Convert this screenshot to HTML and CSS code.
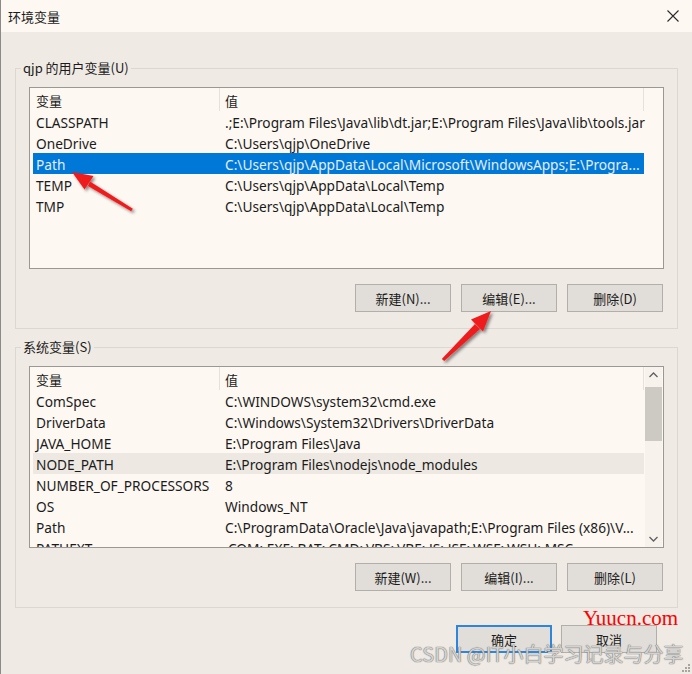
FILE: index.html
```html
<!DOCTYPE html>
<html lang="zh-CN">
<head>
<meta charset="utf-8">
<title>环境变量</title>
<link rel="stylesheet" href="styles.css">
</head>
<body>
<div class="window">
  <div class="titlebar">
    <span class="title">环境变量</span>
    <svg class="close" width="12" height="12" viewBox="0 0 12 12"><path d="M0.5 0.5 L11.5 11.5 M11.5 0.5 L0.5 11.5" stroke="#2b2b2b" stroke-width="1.1" fill="none"/></svg>
  </div>
  <div class="content">
    <div class="group">
      <span class="legend">qjp 的用户变量(U)</span>
      <div class="list">
        <div class="rows">
          <div class="row head"><span class="c1">变量</span><span class="c2">值</span></div>
          <div class="row"><span class="c1">CLASSPATH</span><span class="c2">.;E:\Program Files\Java\lib\dt.jar;E:\Program Files\Java\lib\tools.jar</span></div>
          <div class="row"><span class="c1">OneDrive</span><span class="c2">C:\Users\qjp\OneDrive</span></div>
          <div class="row sel"><span class="c1">Path</span><span class="c2">C:\Users\qjp\AppData\Local\Microsoft\WindowsApps;E:\Progra...</span></div>
          <div class="row"><span class="c1">TEMP</span><span class="c2">C:\Users\qjp\AppData\Local\Temp</span></div>
          <div class="row"><span class="c1">TMP</span><span class="c2">C:\Users\qjp\AppData\Local\Temp</span></div>
        </div>
      </div>
      <div class="btns">
        <button class="btn">新建(N)...</button>
        <button class="btn">编辑(E)...</button>
        <button class="btn">删除(D)</button>
      </div>
    </div>

    <div class="group g2">
      <span class="legend">系统变量(S)</span>
      <div class="list">
        <div class="rows">
          <div class="row head"><span class="c1">变量</span><span class="c2">值</span></div>
          <div class="row"><span class="c1">ComSpec</span><span class="c2">C:\WINDOWS\system32\cmd.exe</span></div>
          <div class="row"><span class="c1">DriverData</span><span class="c2">C:\Windows\System32\Drivers\DriverData</span></div>
          <div class="row"><span class="c1">JAVA_HOME</span><span class="c2">E:\Program Files\Java</span></div>
          <div class="row hover"><span class="c1">NODE_PATH</span><span class="c2">E:\Program Files\nodejs\node_modules</span></div>
          <div class="row"><span class="c1">NUMBER_OF_PROCESSORS</span><span class="c2">8</span></div>
          <div class="row"><span class="c1">OS</span><span class="c2">Windows_NT</span></div>
          <div class="row"><span class="c1">Path</span><span class="c2">C:\ProgramData\Oracle\Java\javapath;E:\Program Files (x86)\V...</span></div>
          <div class="row"><span class="c1">PATHEXT</span><span class="c2">.COM;.EXE;.BAT;.CMD;.VBS;.VBE;.JS;.JSE;.WSF;.WSH;.MSC</span></div>
        </div>
        <div class="scrollbar">
          <svg class="arrow" width="17" height="17" viewBox="0 0 17 17"><path d="M4.5 10 L8.5 6 L12.5 10" stroke="#606060" stroke-width="1.3" fill="none"/></svg>
          <div class="track"><div class="thumb"></div></div>
          <svg class="arrow" width="17" height="17" viewBox="0 0 17 17"><path d="M4.5 7 L8.5 11 L12.5 7" stroke="#606060" stroke-width="1.3" fill="none"/></svg>
        </div>
      </div>
      <div class="btns">
        <button class="btn">新建(W)...</button>
        <button class="btn">编辑(I)...</button>
        <button class="btn">删除(L)</button>
      </div>
    </div>

    <div class="footer">
      <button class="btn ok">确定</button>
      <button class="btn">取消</button>
    </div>
  </div>
</div>

<svg class="arrows" width="692" height="674" viewBox="0 0 692 674">
  <defs>
    <filter id="sh" x="-20%" y="-20%" width="140%" height="140%">
      <feDropShadow dx="2" dy="2" stdDeviation="1.6" flood-color="#000" flood-opacity="0.45"/>
    </filter>
  </defs>
  <g fill="#ee1c1c" filter="url(#sh)">
    <polygon points="132.8,208.8 131.2,211.2 88,186 90,181.4"/>
    <polygon points="72,172 93.5,176 84.5,189.5"/>
    <polygon points="441.8,359 444.2,361 480,329 475,324"/>
    <polygon points="491,311 483,331.5 471,319.5"/>
  </g>
</svg>

<span class="wm-yuucn">Yuucn.com</span>
<span class="wm-csdn">CSDN @IT小白学习记录与分享</span>
<svg class="grip" width="8" height="8" viewBox="0 0 8 8"><g fill="#a8a4a0"><rect x="6" y="0" width="2" height="2"/><rect x="3" y="3" width="2" height="2"/><rect x="6" y="3" width="2" height="2"/><rect x="0" y="6" width="2" height="2"/><rect x="3" y="6" width="2" height="2"/><rect x="6" y="6" width="2" height="2"/></g></svg>
</body>
</html>
```

FILE: styles.css
```css
html, body {
  margin: 0;
  padding: 0;
}
body {
  width: 692px;
  height: 674px;
  overflow: hidden;
  position: relative;
  background: #efeae4;
  font-family: "Noto Sans", "Noto Sans CJK SC", sans-serif;
  font-size: 13.7px;
  color: #1b1b1b;
}
.window {
  height: 674px;
  border-left: 1px solid #8c8986;
  box-sizing: border-box;
}
.titlebar {
  height: 32px;
  background: #fdf8f2;
  display: flex;
  align-items: center;
  justify-content: space-between;
  padding: 0 13px 0 7px;
}
.title {
  font-family: "Noto Sans CJK SC", sans-serif;
  font-size: 13px;
}
.close {
  display: block;
}
.content {
  padding: 36px 14px 0 14px;
}
.group {
  position: relative;
  border: 1px solid #dcd7d1;
  padding: 18px 13px 16px 13px;
}
.g2 {
  margin-top: 18px;
}
.legend {
  position: absolute;
  top: -11px;
  left: 5px;
  padding: 0 2px;
  background: #efeae4;
  font-family: "Noto Sans CJK SC", sans-serif;
  font-size: 13px;
  line-height: 20px;
}
.list {
  height: 180px;
  border: 1px solid #9a9894;
  background: #fdf8f2;
  display: flex;
  padding-left: 3px;
  overflow: hidden;
}
.rows {
  width: 611px;
  flex: none;
}
.row {
  display: flex;
  box-sizing: border-box;
  height: 21px;
  padding-top: 2px;
  line-height: 19px;
  white-space: nowrap;
}
.row.head {
  height: 23px;
  line-height: 21px;
}
.c1 {
  width: 183px;
  padding-left: 3px;
  border-right: 1px solid transparent;
  overflow: hidden;
  flex: none;
}
.c2 {
  width: 418px;
  padding-left: 5px;
  border-right: 1px solid transparent;
  overflow: visible;
  flex: none;
}
.head .c1, .head .c2 {
  border-right-color: #e6e1db;
  margin-top: -2px;
  padding-top: 2px;
  font-family: "Noto Sans CJK SC", sans-serif;
  font-size: 13px;
}
.row.sel {
  background: #0078d7;
  color: #e3eefa;
}
.row.hover {
  background: #ede8e2;
}
.scrollbar {
  width: 17px;
  margin-left: 1px;
  display: flex;
  flex-direction: column;
  background: #f7f2ec;
  position: relative;
}
.arrow {
  display: block;
  flex: none;
}
.track {
  flex: 1;
}
.thumb {
  margin-top: 3px;
  height: 54px;
  background: #cdc9c3;
}
.btns {
  display: flex;
  justify-content: flex-end;
  gap: 10px;
  margin-top: 15px;
  padding-right: 1px;
}
.btn {
  width: 96px;
  height: 28px;
  border: 1px solid #b2afab;
  background: #e1ddd8;
  font-family: "Noto Sans CJK SC", sans-serif;
  font-size: 13px;
  color: #1b1b1b;
  padding: 0;
  margin: 0;
}
.footer {
  display: flex;
  justify-content: flex-end;
  gap: 9px;
  margin-top: 17px;
  padding-right: 21px;
}
.btn.ok {
  border: 2px solid #2d86dc;
}
.arrows {
  position: absolute;
  top: 0;
  left: 0;
  pointer-events: none;
}
.wm-yuucn {
  position: absolute;
  left: 583px;
  top: 606px;
  font-family: "Liberation Serif", serif;
  font-size: 21px;
  color: #ff0000;
  line-height: 24px;
}
.wm-csdn {
  position: absolute;
  left: 410px;
  top: 641px;
  font-family: "Noto Sans CJK SC", sans-serif;
  font-size: 20px;
  line-height: 26px;
  color: rgba(232, 230, 228, 0.85);
  text-shadow: 0 0 1px #6a6a6a, 0 0 1px #6a6a6a;
}
.grip {
  position: absolute;
  right: 2px;
  bottom: 2px;
}
```
